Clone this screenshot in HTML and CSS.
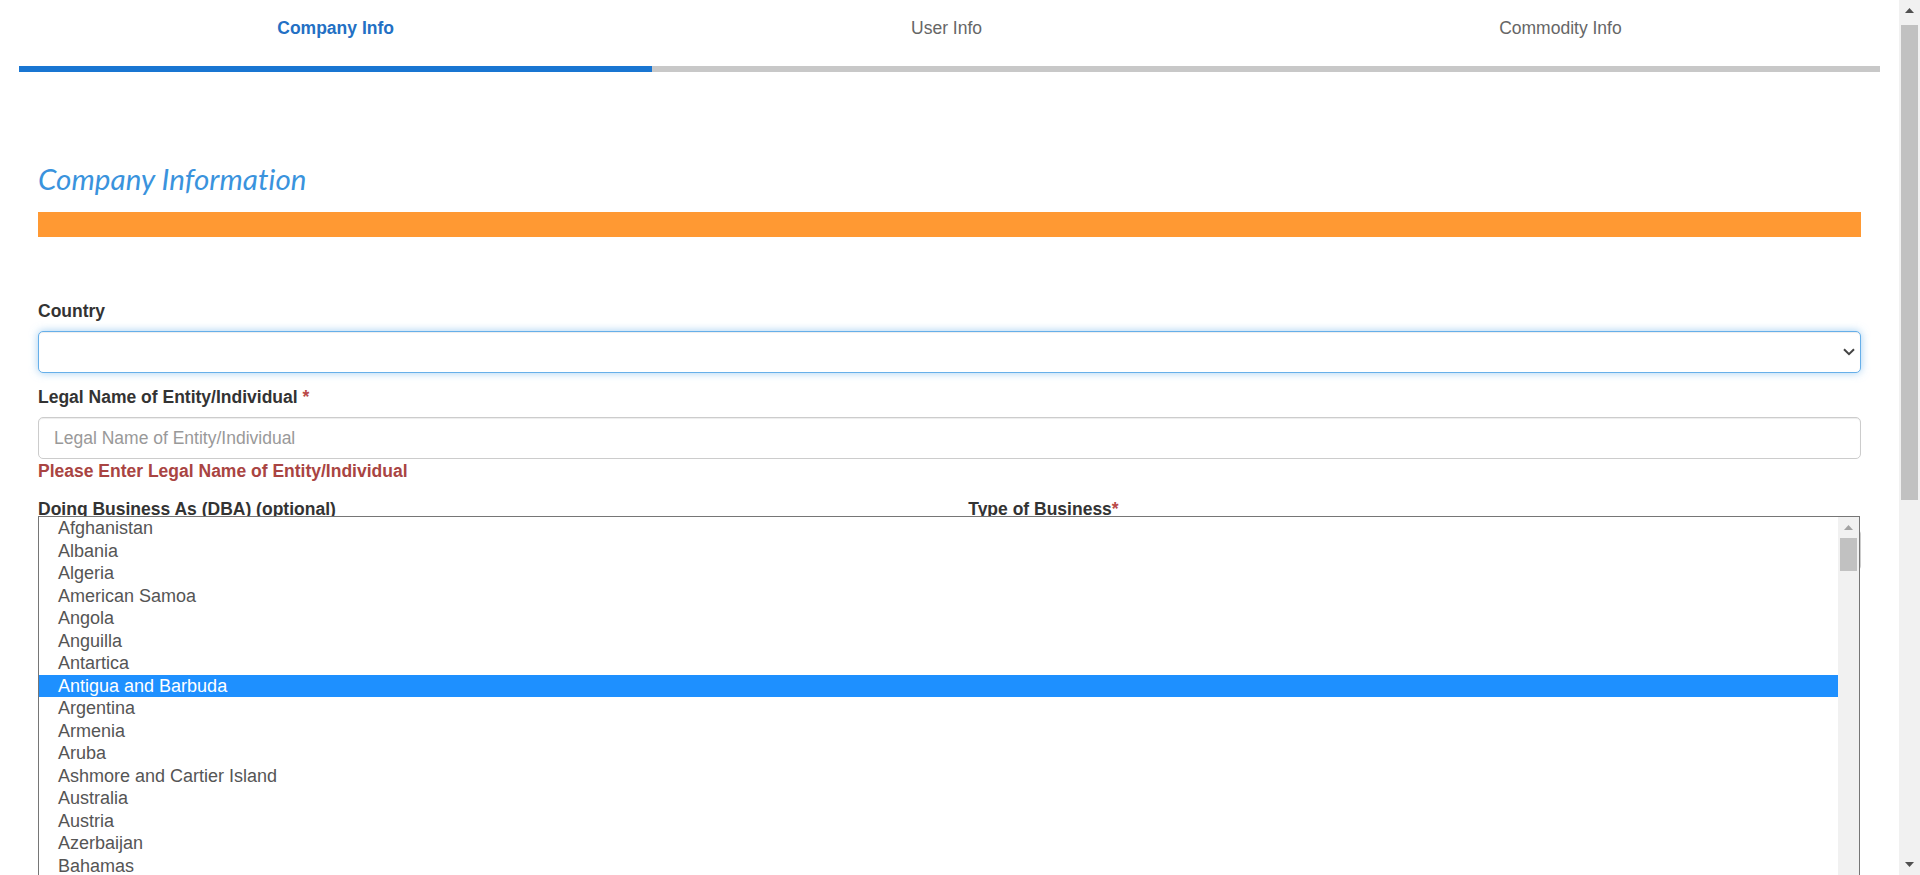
FILE: index.html
```html
<!DOCTYPE html>
<html lang="en">
<head>
<meta charset="utf-8">
<title>Company Info</title>
<link rel="stylesheet" href="styles.css">
</head>
<body>
<div class="screen">
  <main class="page">
    <nav class="steps">
      <div class="tabs">
        <span class="tab active">Company Info</span>
        <span class="tab">User Info</span>
        <span class="tab">Commodity Info</span>
      </div>
      <div class="progress"><div class="progress-fill" style="width:34%"></div></div>
    </nav>

    <section class="form-wrap">
      <h2 class="section-title">Company Information</h2>
      <div class="section-bar"></div>

      <div class="form-group first">
        <label class="ctl-label">Country</label>
        <div class="control select focus">
          <svg class="chev" width="12" height="8" viewBox="0 0 12 8"><path d="M1 1.2 L6 6.2 L11 1.2" fill="none" stroke="#444" stroke-width="2"/></svg>
        </div>
      </div>

      <div class="form-group">
        <label class="ctl-label">Legal Name of Entity/Individual <span class="req">*</span></label>
        <input class="control" type="text" placeholder="Legal Name of Entity/Individual">
        <span class="error">Please Enter Legal Name of Entity/Individual</span>
      </div>

      <div class="form-row">
        <div class="form-group">
          <label class="ctl-label">Doing Business As (DBA) (optional)</label>
          <input class="control" type="text">
        </div>
        <div class="form-group">
          <label class="ctl-label">Type of Business<span class="req">*</span></label>
          <div class="control select"></div>
        </div>

        <div class="popup">
          <ul class="opts">
            <li>Afghanistan</li>
            <li>Albania</li>
            <li>Algeria</li>
            <li>American Samoa</li>
            <li>Angola</li>
            <li>Anguilla</li>
            <li>Antartica</li>
            <li class="sel">Antigua and Barbuda</li>
            <li>Argentina</li>
            <li>Armenia</li>
            <li>Aruba</li>
            <li>Ashmore and Cartier Island</li>
            <li>Australia</li>
            <li>Austria</li>
            <li>Azerbaijan</li>
            <li>Bahamas</li>
            <li>Bahrain</li>
            <li>Bangladesh</li>
          </ul>
          <div class="lscroll">
            <div class="lbtn"><svg width="9" height="5" viewBox="0 0 9 5"><polygon points="0,5 9,5 4.5,0" fill="#a3a3a3"/></svg></div>
            <div class="lthumb"></div>
          </div>
        </div>
      </div>
    </section>
  </main>

  <div class="vscroll">
    <div class="vbtn"><svg width="9" height="5" viewBox="0 0 9 5"><polygon points="0,5 9,5 4.5,0" fill="#505050"/></svg></div>
    <div class="vtrack"><div class="vthumb"></div></div>
    <div class="vbtn"><svg width="9" height="5" viewBox="0 0 9 5"><polygon points="0,0 9,0 4.5,5" fill="#505050"/></svg></div>
  </div>
</div>
</body>
</html>
```

FILE: styles.css
```css
* { box-sizing: border-box; }

html, body {
  margin: 0;
  height: 100%;
  overflow: hidden;
  background: #fff;
}

body {
  font-family: "Liberation Sans", Arial, sans-serif;
  font-size: 17.5px;
  line-height: 25px;
  color: #333;
}

.screen {
  display: flex;
  height: 875px;
}

.page {
  flex: 1;
  min-width: 0;
  padding: 0 18.75px;
  overflow: hidden;
}

/* step tabs */
.tabs {
  display: flex;
  padding: 15.75px 0 25.25px;
}

.tab {
  flex: 1 1 auto;
  text-align: center;
  color: #666;
}

.tab.active {
  color: #2370c4;
  font-weight: bold;
}

.progress {
  height: 6px;
  background: #c8c8c8;
}

.progress-fill {
  height: 100%;
  background: #1976d2;
}

/* form */
.form-wrap {
  padding: 0 19.25px;
}

.section-title {
  margin: 89px 0 0;
  font-family: Lato, "Open Sans", sans-serif;
  font-style: italic;
  font-weight: 400;
  font-size: 29.6px;
  line-height: 35.3px;
  letter-spacing: 0.05px;
  color: #3a93dd;
}

.section-bar {
  height: 25px;
  margin-top: 15.7px;
  background: #ff9933;
}

.form-group {
  margin-bottom: 12.5px;
}

.form-group.first {
  margin-top: 62px;
}

.ctl-label {
  display: block;
  font-weight: bold;
  margin-bottom: 7px;
}

.req {
  color: #b94a48;
}

.control {
  display: flex;
  align-items: center;
  width: 100%;
  height: 42px;
  margin: 0;
  padding: 0 15px;
  border: 1px solid #ccc;
  border-radius: 5px;
  background: #fff;
  box-shadow: inset 0 1px 1px rgba(0, 0, 0, .075);
  font-family: "Liberation Sans", Arial, sans-serif;
  font-size: 17.5px;
  color: #555;
  outline: none;
}

.control::placeholder {
  color: #999;
}

.control.focus {
  border-color: #66afe9;
  box-shadow: inset 0 1px 1px rgba(0, 0, 0, .075), 0 0 8px rgba(102, 175, 233, .6);
}

.select {
  justify-content: flex-end;
  padding-right: 5px;
}

.chev {
  display: block;
}

.error {
  display: block;
  color: #a94442;
  font-weight: bold;
}

.form-row {
  position: relative;
  display: grid;
  grid-template-columns: 1fr 1fr;
  column-gap: 37.5px;
}

/* open select popup */
.popup {
  position: absolute;
  top: 19.5px;
  left: 0;
  width: 1822px;
  height: 420px;
  display: flex;
  background: #fff;
  border: 1px solid #767676;
  z-index: 5;
}

.opts {
  flex: 1;
  margin: 0;
  padding: 0;
  list-style: none;
}

.opts li {
  height: 22.5px;
  line-height: 22.5px;
  padding-left: 19px;
  font-size: 18px;
  color: #555;
  white-space: nowrap;
}

.opts li.sel {
  background: #1e90ff;
  color: #fff;
}

.lscroll {
  width: 21px;
  background: #f1f1f1;
  display: flex;
  flex-direction: column;
  align-items: center;
}

.lbtn {
  height: 21px;
  display: flex;
  align-items: center;
  justify-content: center;
}

.lthumb {
  width: 17px;
  height: 33px;
  background: #c1c1c1;
}

/* page scrollbar */
.vscroll {
  width: 21px;
  flex: none;
  display: flex;
  flex-direction: column;
  background: #f1f1f1;
}

.vbtn {
  height: 21px;
  display: flex;
  align-items: center;
  justify-content: center;
}

.vtrack {
  flex: 1;
  padding: 4px 2px 0;
}

.vthumb {
  height: 475px;
  background: #c1c1c1;
}
```
